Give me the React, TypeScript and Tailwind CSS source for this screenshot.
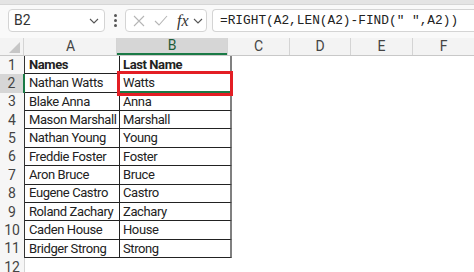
const rows: [string, string][] = [
  ["Names", "Last Name"],
  ["Nathan Watts", "Watts"],
  ["Blake Anna", "Anna"],
  ["Mason Marshall", "Marshall"],
  ["Nathan Young", "Young"],
  ["Freddie Foster", "Foster"],
  ["Aron Bruce", "Bruce"],
  ["Eugene Castro", "Castro"],
  ["Roland Zachary", "Zachary"],
  ["Caden House", "House"],
  ["Bridger Strong", "Strong"],
];

const otherCols = [
  { name: "C", w: "w-[62px]" },
  { name: "D", w: "w-[61px]" },
  { name: "E", w: "w-[62px]" },
  { name: "F", w: "w-[62px]" },
];

function Chevron() {
  return (
    <svg width="10" height="6" viewBox="0 0 10 6" fill="none">
      <path d="M1 1l4 4 4-4" stroke="#555" strokeWidth="1.1" />
    </svg>
  );
}

export default function App() {
  return (
    <div
      className="relative w-[474px] h-[272px] overflow-hidden bg-white text-[#222]"
      style={{ fontFamily: "Roboto, sans-serif" }}
    >
      <div className="h-[5px] bg-[#e4e4e4] border-b border-[#d6d6d6]" />

      {/* formula bar */}
      <div className="h-[33px] bg-[#f9f9f9] flex items-start pt-[4px] pl-[8px]">
        <div className="w-[97px] h-[23px] bg-white border border-[#d4d4d4] rounded-[4px] flex items-center justify-between pl-[5px] pr-[5px]">
          <span className="text-[14px] text-[#333]">B2</span>
          <Chevron />
        </div>
        <div className="w-[20px] h-[23px] flex flex-col items-center justify-center gap-[2px]">
          <div className="w-[3px] h-[3px] rounded-full bg-[#555]" />
          <div className="w-[3px] h-[3px] rounded-full bg-[#555]" />
          <div className="w-[3px] h-[3px] rounded-full bg-[#555]" />
        </div>
        <div className="w-[82px] h-[23px] bg-white border border-[#d4d4d4] rounded-[4px] flex items-center pl-[7px] gap-[9px]">
          <svg width="12" height="12" viewBox="0 0 12 12">
            <path d="M1 1l10 10M11 1L1 11" stroke="#b5b5b5" strokeWidth="1.1" />
          </svg>
          <svg width="14" height="11" viewBox="0 0 14 11" fill="none">
            <path d="M1 6l4 4 8-9" stroke="#b5b5b5" strokeWidth="1.1" />
          </svg>
          <div className="flex items-center gap-[4px]">
            <span
              className="italic text-[16px] leading-none text-[#333]"
              style={{ fontFamily: '"Liberation Serif", serif' }}
            >
              fx
            </span>
            <Chevron />
          </div>
        </div>
        <div className="ml-[5px] flex-1 h-[23px] bg-white border border-[#d4d4d4] rounded-l-[4px] border-r-0 flex items-center pl-[7px]">
          <span className="text-[12.8px] text-[#222] whitespace-pre" style={{ fontFamily: '"Liberation Mono", monospace' }}>
            =RIGHT(A2,LEN(A2)-FIND(" ",A2))
          </span>
        </div>
      </div>

      {/* column headers */}
      <div className="flex h-[18px] bg-[#f3f3f3] border-b border-[#c8c8c8] text-[14px] text-[#444]">
        <div className="w-[25px] border-r border-[#d4d4d4] relative">
          <div className="absolute right-[3px] bottom-[2px] w-0 h-0 border-l-[11px] border-l-transparent border-b-[11px] border-b-[#c6c6c6]" />
        </div>
        <div className="w-[95px] border-r border-[#d4d4d4] flex items-center justify-center">A</div>
        <div className="w-[112px] bg-[#d6d6d6] border-b-2 border-[#1a7a46] text-[#1d5c38] flex items-center justify-center">
          B
        </div>
        {otherCols.map((c) => (
          <div key={c.name} className={`${c.w} shrink-0 border-l border-[#d4d4d4] flex items-center justify-center`}>
            {c.name}
          </div>
        ))}
      </div>

      {/* rows */}
      {rows.map(([a, b], i) => {
        const sel = i === 1;
        return (
          <div key={i} className="flex h-[18.36px]">
            <div
              className={`w-[25px] shrink-0 flex items-center justify-center text-[14px] text-[#444] border-r ${
                sel ? "bg-[#d6d6d6] border-r-2 border-[#1a7a46]" : "bg-[#f6f6f6] border-[#333]"
              }`}
            >
              {i + 1}
            </div>
            <div
              className={`w-[95px] shrink-0 border-r border-b border-[#222] pl-[4px] flex items-center text-[13px] tracking-[-0.4px] whitespace-nowrap ${
                i === 0 ? "font-bold" : ""
              }`}
            >
              {a}
            </div>
            <div
              className={`w-[112px] shrink-0 border-r-2 border-r-[#808080] border-b pl-[3px] flex items-center text-[13px] tracking-[-0.4px] whitespace-nowrap ${
                i === 0 ? "font-bold" : ""
              } ${sel ? "border-b-[#1a7a46] border-b-2" : "border-b-[#222]"}`}
            >
              {b}
            </div>
          </div>
        );
      })}
      <div className="flex h-[18.36px]">
        <div className="w-[25px] shrink-0 flex items-center justify-center text-[14px] text-[#444] bg-[#f6f6f6] border-r border-[#d4d4d4]">
          12
        </div>
      </div>

      {/* highlight */}
      <div className="absolute left-[117px] top-[71px] w-[116px] h-[25px] border-[3px] border-[#e31e24]" />
    </div>
  );
}
